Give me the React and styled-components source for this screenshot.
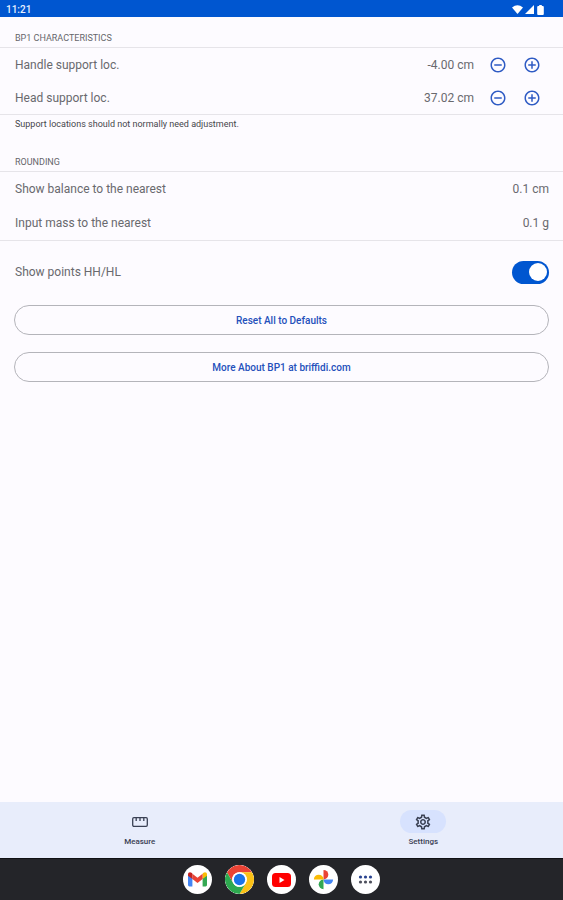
import React, { useState } from "react";
import styled, { createGlobalStyle } from "styled-components";
import {
  MdAddCircleOutline,
  MdOutlineSettings,
  MdRemoveCircleOutline,
} from "react-icons/md";

const GlobalStyle = createGlobalStyle`
  * {
    box-sizing: border-box;
  }

  body {
    margin: 0;
    background-color: #fdfbff;
    font-family: Roboto, "Liberation Sans", sans-serif;
  }

  button, select {
    font-family: inherit;
  }
`;

const Page = styled.div`
  min-height: 100vh;
  display: flex;
  flex-direction: column;
`;

const StatusBar = styled.header`
  height: 17px;
  padding: 2px 18px 0 6px;
  display: flex;
  align-items: center;
  justify-content: space-between;
  background-color: #0056d0;
  color: #e8efff;
  font-size: 10px;
  font-weight: 500;
`;

const StatusIcons = styled.div`
  display: flex;
  align-items: center;
  gap: 2px;
`;

const Main = styled.main`
  flex: 1;
`;

const SectionTitle = styled.h2`
  margin: 0;
  height: ${(props) => (props.$first ? "30px" : "41px")};
  padding: 0 15px 3px;
  display: flex;
  align-items: flex-end;
  color: #66666b;
  font-size: 9px;
  line-height: 12px;
  font-weight: 400;
  text-transform: uppercase;
`;

const Group = styled.div`
  border-top: 1px solid #e6e4e9;
  border-bottom: 1px solid #e6e4e9;
`;

const Row = styled.div`
  height: 34px;
  padding: 0 14px 0 15px;
  display: flex;
  align-items: center;
  color: #69696e;
  font-size: 12px;
`;

const StepperRow = styled(Row)`
  height: 33px;
`;

const SwitchRow = styled(Row)`
  height: 62px;
`;

const Label = styled.label`
  flex: 1;
`;

const Value = styled.output`
  margin-right: 7px;
`;

const StepButton = styled.button`
  width: 34px;
  height: 33px;
  padding: 0;
  border: 0;
  display: flex;
  align-items: center;
  justify-content: center;
  background: none;
  color: #2f5bc4;
`;

const Picker = styled.select`
  appearance: none;
  border: 0;
  padding: 0;
  background: none;
  color: inherit;
  font-size: 12px;
  text-align-last: right;
`;

const Note = styled.p`
  margin: 0;
  padding: 3px 15px 0;
  color: #46464b;
  font-size: 9px;
  line-height: 12px;
`;

const Switch = styled.input`
  appearance: none;
  width: 37px;
  height: 23px;
  margin: 0;
  padding: 0 2px;
  border-radius: 12px;
  display: flex;
  align-items: center;
  justify-content: ${(props) => (props.checked ? "flex-end" : "flex-start")};
  background-color: ${(props) => (props.checked ? "#0056d0" : "#c5c6d0")};

  &::before {
    content: "";
    width: 18px;
    height: 18px;
    border-radius: 50%;
    background-color: #fff;
  }
`;

const Actions = styled.div`
  padding: 2px 14px;
  display: flex;
  flex-direction: column;
  gap: 17px;
`;

const outlined = `
  height: 30px;
  border: 1px solid #b4b4ba;
  border-radius: 15px;
  display: flex;
  align-items: center;
  justify-content: center;
  background: none;
  color: #2450bb;
  font-size: 10px;
  font-weight: 500;
  text-decoration: none;
`;

const OutlinedButton = styled.button`
  ${outlined}
`;

const OutlinedLink = styled.a`
  ${outlined}
`;

const TabBar = styled.nav`
  height: 56px;
  padding-top: 8px;
  display: flex;
  gap: 4px;
  background-color: #e8edfb;
`;

const Tab = styled.button`
  flex: 1;
  padding: 0;
  border: 0;
  display: flex;
  flex-direction: column;
  align-items: center;
  gap: 3px;
  background: none;
  color: #3a4154;
  font-size: 8px;
  line-height: 12px;
  font-weight: 500;
`;

const TabIcon = styled.span`
  width: 46px;
  height: 23px;
  border-radius: 12px;
  display: flex;
  align-items: center;
  justify-content: center;
  background-color: ${(props) => (props.$active ? "#d7e2fe" : "transparent")};
`;

const Dock = styled.footer`
  height: 42px;
  display: flex;
  align-items: center;
  justify-content: center;
  gap: 13px;
  border-top: 1px solid #101114;
  background-color: #242529;
`;

const DockApp = styled.button`
  width: 29px;
  height: 29px;
  padding: 0;
  border: 0;
  border-radius: 50%;
  display: flex;
  align-items: center;
  justify-content: center;
  overflow: hidden;
  background-color: #fff;
`;

const WifiIcon = () => (
  <svg width="11" height="9" viewBox="0 0 11 9" fill="#fff">
    <path d="M5.5 9 0 2.5Q5.5-1.9 11 2.5z" />
  </svg>
);

const SignalIcon = () => (
  <svg width="9" height="9" viewBox="0 0 9 9" fill="#fff">
    <path d="M9 0v9H0z" />
  </svg>
);

const BatteryIcon = () => (
  <svg width="9" height="10" viewBox="0 0 9 10" fill="#fff">
    <path d="M3.2 0h2.6v1h1q1 0 1 1v7q0 1-1 1H2.2q-1 0-1-1V2q0-1 1-1h1z" />
  </svg>
);

const RulerIcon = () => (
  <svg width="18" height="18" viewBox="0 0 18 18" fill="none" stroke="currentColor">
    <rect x="1.7" y="4.7" width="14.6" height="8.6" rx="1.2" strokeWidth="1.3" />
    <path d="M5.2 5v3M9 5v3M12.8 5v3" strokeWidth="1.3" />
  </svg>
);

const GmailIcon = () => (
  <svg width="19" height="15" viewBox="0 0 19 15">
    <path d="M0 2.5V13q0 1.4 1.4 1.4h3V6z" fill="#4285f4" />
    <path d="M14.6 6v8.4h3q1.4 0 1.4-1.4V2.5z" fill="#34a853" />
    <path d="M14.6 1.8V7L19 3.8V2.4C19 .4 17-.4 15.5.8z" fill="#fbbc04" />
    <path d="M4.4 7V1.8l5.1 3.9 5.1-3.9V7l-5.1 3.9z" fill="#ea4335" />
    <path d="M0 2.4v1.4L4.4 7V1.8L3.5.8C2-.4 0 .4 0 2.4z" fill="#c5221f" />
  </svg>
);

const ChromeIcon = () => (
  <svg width="29" height="29" viewBox="0 0 48 48">
    <circle cx="24" cy="24" r="24" fill="#fff" />
    <path d="M3.2 12a24 24 0 0 1 41.6 0H24a12 12 0 0 0-10.4 18z" fill="#ea4335" />
    <path d="M44.8 12A24 24 0 0 1 24 48l10.4-18A12 12 0 0 0 24 12z" fill="#fbc116" />
    <path d="M3.2 12A24 24 0 0 0 24 48l10.4-18a12 12 0 0 1-20.8 0z" fill="#2da94f" />
    <circle cx="24" cy="24" r="12" fill="#fff" />
    <circle cx="24" cy="24" r="9.4" fill="#1a73e8" />
  </svg>
);

const YoutubeIcon = () => (
  <svg width="19" height="14" viewBox="0 0 19 14">
    <rect width="19" height="14" rx="3.5" fill="#f00" />
    <path d="m7.5 4 5 3-5 3z" fill="#fff" />
  </svg>
);

const PhotosIcon = () => (
  <svg width="21" height="21" viewBox="0 0 24 24">
    <path d="M12 1a5.5 5.5 0 0 1 0 11z" fill="#ea4335" />
    <path d="M23 12a5.5 5.5 0 0 1-11 0z" fill="#4285f4" />
    <path d="M12 23a5.5 5.5 0 0 1 0-11z" fill="#34a853" />
    <path d="M1 12a5.5 5.5 0 0 1 11 0z" fill="#fbbc04" />
  </svg>
);

const AppsIcon = () => (
  <svg width="15" height="11" viewBox="0 0 15 11">
    {[2.5, 7.5, 12.5].map((x) => (
      <g key={x}>
        <circle cx={x} cy="3" r="1.6" fill="#29438f" />
        <circle cx={x} cy="8" r="1.6" fill="#4d4f5c" />
      </g>
    ))}
  </svg>
);

const dockApps = [
  { name: "Gmail", Icon: GmailIcon },
  { name: "Chrome", Icon: ChromeIcon },
  { name: "YouTube", Icon: YoutubeIcon },
  { name: "Photos", Icon: PhotosIcon },
  { name: "All apps", Icon: AppsIcon },
];

const Stepper = ({ id, label, initial }) => {
  const [value, setValue] = useState(initial);

  return (
    <StepperRow>
      <Label htmlFor={id}>{label}</Label>
      <Value id={id}>{value.toFixed(2)} cm</Value>
      <StepButton
        aria-label={`Decrease ${label}`}
        onClick={() => setValue(value - 0.01)}
      >
        <MdRemoveCircleOutline size={18} />
      </StepButton>
      <StepButton
        aria-label={`Increase ${label}`}
        onClick={() => setValue(value + 0.01)}
      >
        <MdAddCircleOutline size={18} />
      </StepButton>
    </StepperRow>
  );
};

const App = () => {
  const [showPoints, setShowPoints] = useState(true);

  return (
    <Page>
      <GlobalStyle />
      <StatusBar>
        <span>11:21</span>
        <StatusIcons>
          <WifiIcon />
          <SignalIcon />
          <BatteryIcon />
        </StatusIcons>
      </StatusBar>
      <Main>
        <SectionTitle $first>BP1 Characteristics</SectionTitle>
        <Group>
          <Stepper id="handle" label="Handle support loc." initial={-4} />
          <Stepper id="head" label="Head support loc." initial={37.02} />
        </Group>
        <Note>Support locations should not normally need adjustment.</Note>
        <SectionTitle>Rounding</SectionTitle>
        <Group>
          <Row>
            <Label htmlFor="balance">Show balance to the nearest</Label>
            <Picker id="balance">
              <option>0.1 cm</option>
            </Picker>
          </Row>
          <Row>
            <Label htmlFor="mass">Input mass to the nearest</Label>
            <Picker id="mass">
              <option>0.1 g</option>
            </Picker>
          </Row>
        </Group>
        <SwitchRow>
          <Label htmlFor="points">Show points HH/HL</Label>
          <Switch
            id="points"
            type="checkbox"
            role="switch"
            checked={showPoints}
            onChange={(e) => setShowPoints(e.target.checked)}
          />
        </SwitchRow>
        <Actions>
          <OutlinedButton>Reset All to Defaults</OutlinedButton>
          <OutlinedLink href="#about">More About BP1 at briffidi.com</OutlinedLink>
        </Actions>
      </Main>
      <TabBar>
        <Tab>
          <TabIcon>
            <RulerIcon />
          </TabIcon>
          Measure
        </Tab>
        <Tab aria-current="page">
          <TabIcon $active>
            <MdOutlineSettings size={18} />
          </TabIcon>
          Settings
        </Tab>
      </TabBar>
      <Dock>
        {dockApps.map(({ name, Icon }) => (
          <DockApp key={name} aria-label={name}>
            <Icon />
          </DockApp>
        ))}
      </Dock>
    </Page>
  );
};

export default App;
